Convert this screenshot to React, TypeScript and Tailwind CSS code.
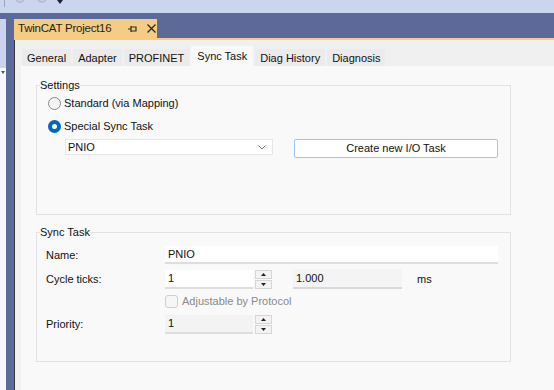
import React from "react";

const font = { fontFamily: '"Liberation Sans", Arial, sans-serif' };

const tabs = ["General", "Adapter", "PROFINET", "Sync Task", "Diag History", "Diagnosis"];

function Spinner() {
  return (
    <div className="ml-[2px] flex h-[19px] w-[17px] flex-col">
      <div className="flex h-[9px] items-center justify-center border border-[#d6d6d6] bg-[#f3f3f3]">
        <svg width="5" height="3" viewBox="0 0 5 3">
          <path d="M0 3 L2.5 0 L5 3 Z" fill="#222" />
        </svg>
      </div>
      <div className="mt-px flex h-[9px] items-center justify-center border border-[#d6d6d6] bg-[#f3f3f3]">
        <svg width="5" height="3" viewBox="0 0 5 3">
          <path d="M0 0 L2.5 3 L5 0 Z" fill="#222" />
        </svg>
      </div>
    </div>
  );
}

function Field({ value, grey }: { value: string; grey?: boolean }) {
  return (
    <div
      className={`flex h-[19px] w-[88px] items-center border-b-2 border-[#dedede] pl-[3px] text-[11px] text-[#111] ${
        grey ? "bg-[#f3f3f3]" : "bg-white"
      }`}
    >
      {value}
    </div>
  );
}

export default function App() {
  return (
    <div className="h-[390px] w-[554px] overflow-hidden bg-[#5b6a99]" style={font}>
      {/* toolbar strip, mostly scrolled off */}
      <div className="relative h-[13px] bg-[#ccd5f0]">
        <div className="absolute left-[4px] top-0 h-[7px] w-px bg-[#9aa3bf]" />
        <div className="absolute left-[15px] top-[-7px] h-[10px] w-[10px] rounded-full border-2 border-[#b3bbd3]" />
        <div className="absolute left-[37px] top-[-7px] h-[10px] w-[10px] rounded-full border-2 border-[#b3bbd3]" />
        <svg className="absolute left-[57px] top-0" width="6" height="5" viewBox="0 0 6 5">
          <path d="M0 0 L6 0 L3 4 Z" fill="#1e2232" />
        </svg>
      </div>

      <div className="flex h-[377px]">
        {/* collapsed side panel */}
        <div className="mt-[6px] flex w-[6px] flex-col">
          <div className="h-[49px] bg-[#cbd4ef]" />
          <div className="relative flex-1 bg-[#f5f7fc]">
            <svg className="absolute left-[1px] top-[3px]" width="4" height="3" viewBox="0 0 4 3">
              <path d="M0 0 L4 0 L2 3 Z" fill="#555" />
            </svg>
          </div>
        </div>

        {/* document well */}
        <div className="ml-[8px] mt-[6px] flex min-w-0 flex-1 flex-col">
          <div className="flex h-[19px] w-[143px] items-center whitespace-nowrap bg-[#f5cc84] pl-[4px] text-[#1e1e1e]">
            <span className="w-[102px] text-[11.5px] tracking-[-0.02em]">TwinCAT Project16</span>
            <svg className="ml-[8px] shrink-0" width="9" height="8" viewBox="0 0 9 8">
              <path d="M0 4 H3 M3 1 V7 M3 2 H8 V6 H3" stroke="#2a2a2a" strokeWidth="1.2" fill="none" />
            </svg>
            <svg className="ml-[10px] shrink-0" width="9" height="9" viewBox="0 0 9 9">
              <path d="M0.5 0.5 L8.5 8.5 M8.5 0.5 L0.5 8.5" stroke="#2a2a2a" strokeWidth="1.3" />
            </svg>
          </div>
          <div className="h-[2px] bg-[#f5cc84]" />

          <div className="flex flex-1 flex-col border-l border-[#3a3a3a] bg-[#f0f0f0] pl-[6px] pt-[6px]">
            <div className="ml-px flex h-[20px] items-end gap-[2px]">
              {tabs.map((t) =>
                t === "Sync Task" ? (
                  <div key={t} className="flex h-[20px] items-start bg-[#f9f9f9] px-[6px] pt-[4px] text-[11px] leading-[13px] text-[#111]">
                    {t}
                  </div>
                ) : (
                  <div key={t} className="flex h-[17px] items-start bg-[#ebebeb] px-[5px] pt-[3px] text-[11px] leading-[13px] text-[#111]">
                    {t}
                  </div>
                )
              )}
            </div>

            <div className="flex-1 bg-[#f9f9f9] pl-[15px] pt-[13px] text-[11px] text-[#111]">
              {/* Settings */}
              <fieldset className="h-[136px] w-[475px] border border-[#e2e2e2] pl-[11px]">
                <legend className="ml-[-8px] px-0 leading-[13px]">Settings</legend>
                <div className="mt-[5px] flex h-[13px] items-center">
                  <div className="h-[13px] w-[13px] rounded-full border border-[#8a8a8a] bg-[#f3f3f3]" />
                  <span className="ml-[3px]">Standard (via Mapping)</span>
                </div>
                <div className="mt-[10px] flex h-[13px] items-center">
                  <div className="flex h-[13px] w-[13px] items-center justify-center rounded-full bg-[#0067c0]">
                    <div className="h-[5px] w-[5px] rounded-full bg-white" />
                  </div>
                  <span className="ml-[3px]">Special Sync Task</span>
                </div>
                <div className="mt-[6px] flex items-start">
                  <div className="ml-[17px] flex h-[16px] w-[208px] items-center justify-between border border-[#e6e6e6] bg-white pl-[2px] pr-[6px]">
                    <span>PNIO</span>
                    <svg width="8" height="5" viewBox="0 0 8 5">
                      <path d="M0.5 0.5 L4 4 L7.5 0.5" stroke="#777" strokeWidth="1" fill="none" />
                    </svg>
                  </div>
                  <div className="ml-[21px] flex h-[19px] w-[204px] items-center justify-center rounded-[2px] border border-[#9ec7ec] bg-white">
                    Create new I/O Task
                  </div>
                </div>
              </fieldset>

              {/* Sync Task */}
              <fieldset className="mt-[11px] h-[136px] w-[475px] border border-[#e2e2e2] pl-[9px]">
                <legend className="ml-[-6px] px-0 leading-[13px]">Sync Task</legend>
                <div className="mt-[7px] flex items-center">
                  <span className="w-[119px]">Name:</span>
                  <div className="flex h-[18px] w-[333px] items-center border-b-2 border-[#dedede] bg-white pl-[3px]">PNIO</div>
                </div>
                <div className="mt-[5px] flex items-center">
                  <span className="w-[119px]">Cycle ticks:</span>
                  <Field value="1" />
                  <Spinner />
                  <div className="ml-[21px] flex h-[20px] w-[109px] items-center border-b-2 border-[#d8d8d8] bg-[#f4f4f4] pl-[3px]">1.000</div>
                  <span className="ml-[15px]">ms</span>
                </div>
                <div className="mt-[6px] flex h-[13px] items-center pl-[119px]">
                  <div className="h-[13px] w-[13px] rounded-[3px] border border-[#cfcfcf] bg-[#f6f6f6]" />
                  <span className="ml-[4px] text-[#8a8a8a]">Adjustable by Protocol</span>
                </div>
                <div className="mt-[7px] flex items-center">
                  <span className="w-[119px]">Priority:</span>
                  <Field value="1" grey />
                  <Spinner />
                </div>
              </fieldset>
            </div>
          </div>
        </div>
      </div>
    </div>
  );
}
